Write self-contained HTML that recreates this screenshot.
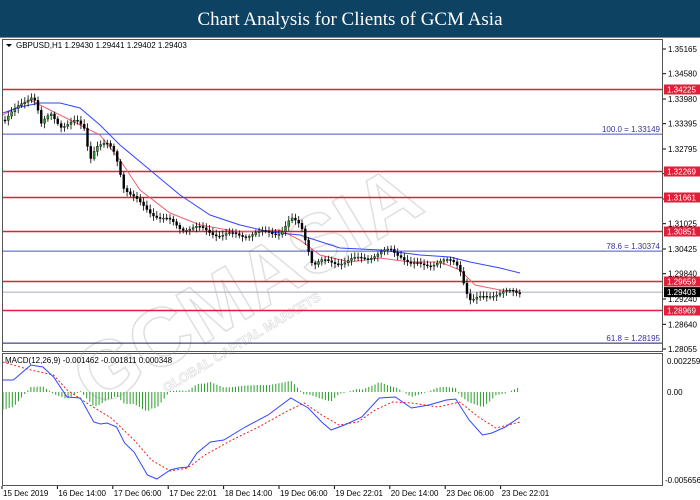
<!DOCTYPE html>
<html><head><meta charset="utf-8"><style>
html,body{margin:0;padding:0;width:700px;height:500px;overflow:hidden;background:#fff}
svg{display:block}
text{font-family:"Liberation Sans",sans-serif}
</style></head><body>
<svg id="s" width="700" height="500" viewBox="0 0 700 500" xmlns="http://www.w3.org/2000/svg">
<rect x="0" y="0" width="700" height="37" fill="#0d4263"/>
<line x1="0" y1="37.5" x2="700" y2="37.5" stroke="#888"/>
<text x="350" y="25" text-anchor="middle" fill="#fff" font-size="19" style="font-family:'Liberation Serif',serif">Chart Analysis for Clients of GCM Asia</text>
<rect x="2.5" y="39.5" width="660" height="312" fill="none" stroke="#555"/>
<rect x="2.5" y="353.5" width="660" height="132" fill="none" stroke="#555"/>
<g id="wm" opacity="0.3" transform="translate(95,410) rotate(-31)">
<text x="0" y="0" font-size="82" font-weight="bold" fill="none" stroke="#999" stroke-width="1.5">GCMASIA</text>
<text x="70" y="22" font-size="13" font-weight="bold" fill="none" stroke="#999" stroke-width="0.8">GLOBAL CAPITAL MARKETS</text>
</g>
<g id="g"></g>
<path d="M6,44 l6,0 l-3,3z" fill="#000"/>
<text x="16" y="48" font-size="8" fill="#000">GBPUSD,H1  1.29430 1.29441 1.29402 1.29403</text>
<text x="5" y="363" font-size="8" fill="#000">MACD(12,26,9) -0.001462 -0.001811 0.000348</text>
</svg>
<script>
const NS="http://www.w3.org/2000/svg",g=document.getElementById('g');
function el(t,a){const e=document.createElementNS(NS,t);for(const k in a)e.setAttribute(k,a[k]);g.appendChild(e);return e;}
function txt(x,y,s,a){const e=el('text',Object.assign({x:x,y:y,'font-size':8,fill:'#000'},a||{}));e.textContent=s;return e;}
const py=p=>49+(1.35165-p)/0.0711*300;
function interp(pts,x){for(let i=0;i<pts.length-1;i++){if(x>=pts[i][0]&&x<=pts[i+1][0]){const t=(x-pts[i][0])/(pts[i+1][0]-pts[i][0]);return pts[i][1]+t*(pts[i+1][1]-pts[i][1]);}}return pts[pts.length-1][1];}
const P=v=>v.map(p=>p.join(',')).join(' ');
[1.35165,1.34580,1.33980,1.33395,1.32795,1.32210,1.31610,1.31025,1.30425,1.29840,1.29240,1.28640,1.28055].forEach(p=>{const y=py(p);el('line',{x1:663,y1:y,x2:666,y2:y,stroke:'#000'});txt(668,y+3,p.toFixed(5));});
[[1.33149,'100.0 = 1.33149','#4455cc'],[1.30374,'78.6  = 1.30374','#4455cc'],[1.28195,'61.8 = 1.28195','#1a1a66']].forEach(f=>{const y=py(f[0]);el('line',{x1:3,y1:y,x2:662,y2:y,stroke:f[2],'stroke-width':1});txt(660,y-2,f[1],{'text-anchor':'end',fill:'#333399'});});
[1.34225,1.32269,1.31661,1.30851,1.29659,1.28969].forEach(p=>{const y=Math.round(py(p))+.5;el('line',{x1:3,y1:y,x2:662,y2:y,stroke:'#e0203a','stroke-width':1.5});el('rect',{x:664,y:y-5,width:36,height:10,fill:'#e0203a'});txt(667,y+3,p.toFixed(5),{fill:'#fff'});});
{const y=py(1.29403);el('line',{x1:3,y1:y,x2:662,y2:y,stroke:'#aab'});el('rect',{x:664,y:y-5,width:36,height:10,fill:'#000'});txt(667,y+3,'1.29403',{fill:'#fff'});}
const pr=[[3,120],[15,110],[30,95],[35,100],[40,125],[50,115],[60,125],[75,122],[85,130],[88,160],[95,145],[105,145],[112,150],[118,165],[122,185],[130,195],[140,205],[150,212],[160,218],[170,222],[180,228],[195,228],[210,232],[220,235],[240,235],[260,233],[280,232],[290,220],[300,225],[305,240],[312,265],[320,262],[330,262],[345,262],[360,258],[375,255],[390,250],[400,255],[410,265],[420,265],[440,262],[455,262],[460,270],[465,290],[470,302],[480,298],[490,294],[500,293],[520,292]];
const rm=[[3,115],[30,100],[50,110],[80,125],[100,135],[120,160],[140,190],[170,213],[200,225],[240,232],[280,230],[300,240],[320,255],[350,262],[380,258],[410,262],[440,262],[460,270],[475,285],[500,290],[520,291]];
const bm=[[3,113],[20,107],[40,103],[60,103],[80,108],[100,125],[120,145],[150,170],[180,195],[210,215],[240,225],[270,232],[300,235],[340,248],[380,250],[420,255],[450,257],[470,262],[500,268],[520,273]];
el('polyline',{points:P(rm),fill:'none',stroke:'#f06070','stroke-width':1});
el('polyline',{points:P(bm),fill:'none',stroke:'#3344ff','stroke-width':1});
let prev=interp(pr,3);
for(let x=4;x<=520;x+=3.3){let c=interp(pr,x)+(Math.sin(x*1.7)*2.5);let o=prev;let hi=Math.min(o,c)-2-Math.abs(Math.sin(x))*3,lo=Math.max(o,c)+2+Math.abs(Math.cos(x*1.3))*3;
el('line',{x1:x+1,y1:hi,x2:x+1,y2:lo,stroke:'#000','stroke-width':0.8});
el('rect',{x:x,y:Math.min(o,c),width:2,height:Math.max(1,Math.abs(o-c)),fill:c<o?'#2a9d2a':'#000',stroke:'#000','stroke-width':0.4});prev=c;}
const mb=[[2,380],[10,380],[23,365],[32,367],[40,377],[50,397],[60,398],[70,422],[75,424],[80,423],[87,427],[93,443],[100,452],[110,475],[117,479],[127,470],[133,468],[140,467],[147,453],[157,442],[167,440],[183,427],[200,415],[217,398],[230,408],[240,422],[247,430],[257,425],[270,417],[283,398],[295,397],[307,408],[320,405],[333,400],[340,399],[350,420],[360,435],[367,433],[377,427],[388,417]];
const mr=[[2,362],[23,370],[40,375],[50,390],[67,405],[83,418],[100,440],[113,460],[127,471],[140,468],[153,455],[173,440],[193,427],[213,412],[227,403],[240,415],[253,425],[267,422],[280,410],[293,402],[307,403],[327,407],[343,402],[357,417],[370,428],[388,422]];
const sx=520/388;
const mbS=mb.map(p=>[p[0]*sx,p[1]]),mrS=mr.map(p=>[p[0]*sx,p[1]]);
for(let x=3;x<=520;x+=3.1){let d=(interp(mrS,x)-interp(mbS,x))*1.0;d=Math.max(-22,Math.min(14,d));el('line',{x1:x,y1:392,x2:x,y2:392-d,stroke:'#2a9d2a','stroke-width':1});}
el('polyline',{points:P(mrS),fill:'none',stroke:'#ee2222','stroke-width':1,'stroke-dasharray':'2,2'});
el('polyline',{points:P(mbS),fill:'none',stroke:'#3344ff','stroke-width':1});
txt(667,364,'0.002259');txt(667,395,'0.00');txt(665,483,'-0.005656');
['15 Dec 2019','16 Dec 14:00','17 Dec 06:00','17 Dec 22:01','18 Dec 14:00','19 Dec 06:00','19 Dec 22:01','20 Dec 14:00','23 Dec 06:00','23 Dec 22:01'].forEach((s,i)=>{const x=2+i*55.4;el('line',{x1:x,y1:486,x2:x,y2:489,stroke:'#000'});txt(x+1,496,s);});
</script>
</body></html>
